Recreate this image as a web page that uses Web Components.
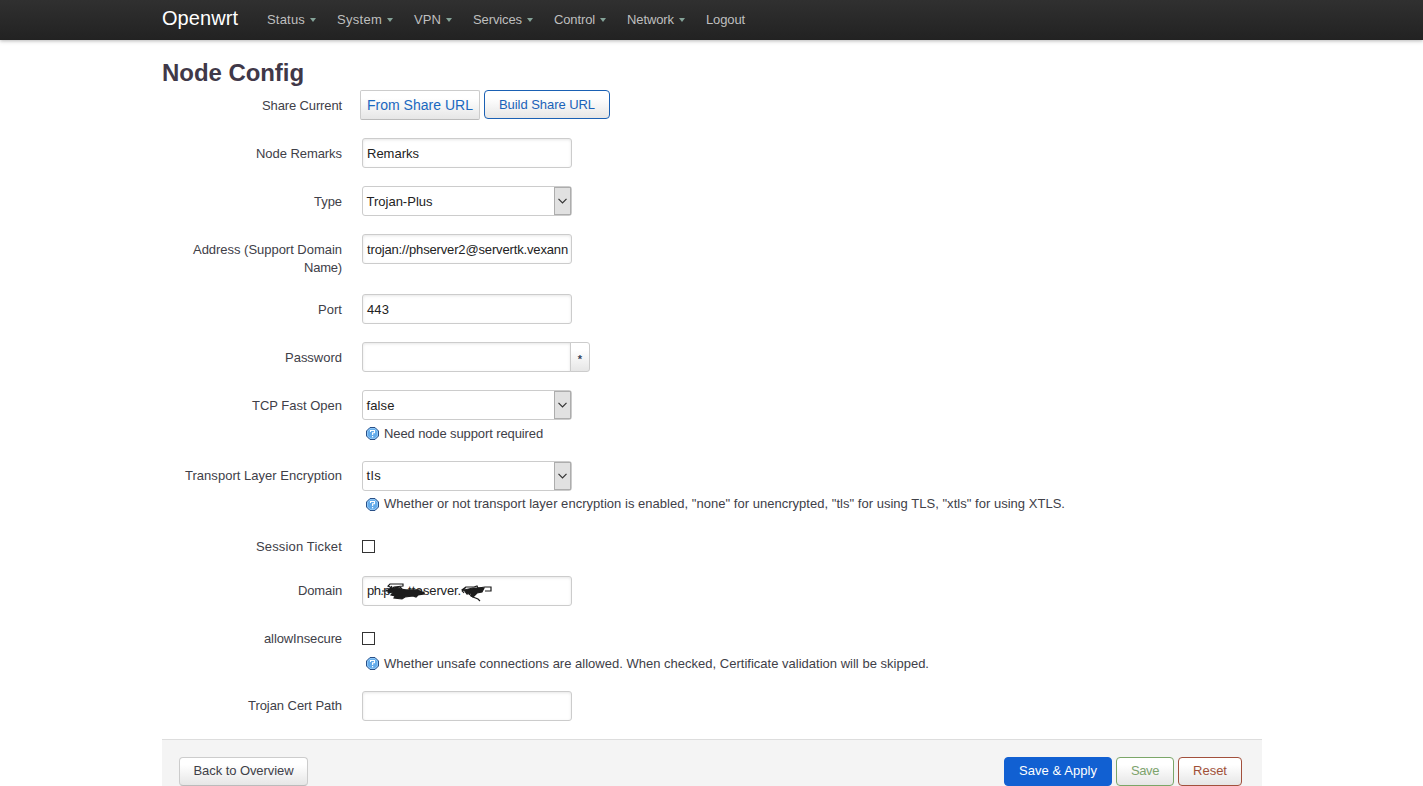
<!DOCTYPE html>
<html lang="en">
<head>
<meta charset="utf-8">
<title>Openwrt - Node Config</title>
<style>
html,body{margin:0;height:786px;overflow:hidden;background:#fff}
body{font:13px/18px "Liberation Sans",Arial,sans-serif;color:#404048}
</style>
</head>
<body>
<node-page></node-page>
<script>
const define = (name, html, ready) => {
  const tpl = document.createElement('template');
  tpl.innerHTML = html;
  customElements.define(name, class extends HTMLElement {
    constructor() {
      super();
      this.attachShadow({mode: 'open'}).appendChild(tpl.content.cloneNode(true));
    }
    connectedCallback() { if (ready) ready(this, this.shadowRoot); }
  });
};

/* Text tracked to an exact line width (w, in px). */
define('fit-text', `<style>:host{display:inline-block;white-space:nowrap}</style><slot></slot>`, el => {
  const w = parseFloat(el.getAttribute('w'));
  el.style.letterSpacing = '0';
  const diff = w - el.getBoundingClientRect().width;
  el.style.letterSpacing = (diff / el.textContent.length) + 'px';
});

define('nav-item', `<style>
:host{display:flex;align-items:center;color:#bfbfbf;font-size:13px;height:40px}
i{width:0;height:0;border:3.5px solid transparent;border-top:4px solid #84a398;border-bottom:0;margin:0 0 0 5px}
:host([plain]) i{display:none}
</style><slot></slot><i></i>`);

define('nav-bar', `<style>
:host{display:block;height:40px;background:linear-gradient(#303030,#222);box-shadow:0 1px 3px rgba(0,0,0,.2),0 2px 5px rgba(0,0,0,.08)}
.in{display:flex;margin-left:162px;align-items:center;height:40px}
.brand{color:#fff;font-size:20px;line-height:36px;height:40px;width:105px}
nav{display:flex;gap:21px}
</style><div class="in"><div class="brand"><fit-text w="76">Openwrt</fit-text></div><nav>
<nav-item><fit-text w="38">Status</fit-text></nav-item>
<nav-item><fit-text w="45">System</fit-text></nav-item>
<nav-item><fit-text w="27">VPN</fit-text></nav-item>
<nav-item><fit-text w="49">Services</fit-text></nav-item>
<nav-item><fit-text w="41">Control</fit-text></nav-item>
<nav-item><fit-text w="47">Network</fit-text></nav-item>
<nav-item plain><fit-text w="39">Logout</fit-text></nav-item>
</nav></div>`);

define('form-row', `<style>
:host{display:grid;grid-template-columns:180px 1fr;column-gap:20px;height:48px;--drop:2px}
:host([high]){--drop:0px}
label{text-align:right;padding-top:calc(6px + var(--drop) / 2)}
</style><label><slot name="label"></slot></label><div><slot></slot></div>`);

define('text-field', `<style>
:host{display:flex;align-items:center;box-sizing:border-box;width:210px;height:30px;border:1px solid #ccc;border-radius:3px;padding:var(--drop,0px) 0 0 4px;color:#222;background:#fff;box-shadow:inset 0 1px 3px rgba(0,0,0,.1);overflow:hidden;white-space:nowrap}
</style><slot></slot>`);

define('secret-field', `<style>
:host{display:flex}
text-field{border-radius:3px 0 0 3px;width:209px}
b{box-sizing:border-box;width:20px;height:30px;margin-left:-1px;border:1px solid #ccc;border-radius:0 3px 3px 0;background:linear-gradient(#fff 25%,#e6e6e6);font:bold 11px/32px "Liberation Sans",sans-serif;text-align:center;color:#34445c}
</style><text-field></text-field><b>*</b>`);

define('select-field', `<style>
:host{display:flex;justify-content:space-between;align-items:center;box-sizing:border-box;width:210px;height:30px;border:1px solid #ccc;border-radius:3px;padding-left:3.5px;color:#222;background:#fff}
div{padding-top:var(--drop,0px)}
span{box-sizing:border-box;width:17px;height:28px;border:1px solid #adadad;background:#e1e1e1;display:grid;place-items:center}
svg{display:block}
</style><div><slot></slot></div><span><svg width="9" height="6" viewBox="0 0 9 6"><path d="M.5 .8 4.5 4.8 8.5 .8" fill="none" stroke="#333" stroke-width="1.2"/></svg></span>`);

define('check-box', `<style>
:host{display:block;box-sizing:border-box;width:13px;height:13px;margin-top:8px;border:1px solid #333;background:#fff}
</style>`);

define('help-text', `<style>
:host{display:flex;align-items:center;height:18px;margin:4px 0 0 4px;white-space:nowrap}
svg{display:block;margin-right:5px}
div{padding-top:var(--drop,0px)}
</style><svg width="13" height="13" viewBox="0 0 13 13"><path d="M4 .5h5L12.5 4v5L9 12.5H4L.5 9V4Z" fill="#62aaea" stroke="#294f86"/><path d="M4.2 1.6h4.6L11.4 4.2v4.6L8.8 11.4H4.2L1.6 8.8V4.2Z" fill="none" stroke="#9fd2fb" stroke-width=".8"/><path d="M4.5 5V3.5h4v2.3H6.6V8" fill="none" stroke="#fff" stroke-width="1.1"/><path d="M6 9h1.2v1.2H6z" fill="#fff"/></svg><div><slot></slot></div>`);

define('push-button', `<style>
:host{display:inline-flex;align-items:center;justify-content:center;box-sizing:border-box;height:29px;border:1px solid #ccc;border-bottom-color:#bbb;border-radius:4px;background:linear-gradient(#fff,#fff 25%,#e6e6e6);color:#404048;padding-bottom:1px}
:host([kind=link]){height:30px;border-radius:2px;color:#1a68c0;font-size:14px;padding:0}
:host([kind=outline]){border-color:#1a60b4;color:#1a62b8;padding:1px 0 0}
:host([kind=apply]){border:1px solid #1160d2;background:#1160d2;color:#fff}
:host([kind=save]){border-color:#7ba668;color:#7da36c}
:host([kind=reset]){border-color:#a2503c;color:#a05038}
</style><slot></slot>`);

/* Domain value with two hand-scribbled strokes over it. */
define('struck-domain', `<style>
:host{display:flex;align-items:center;position:relative;height:28px;width:200px}
svg{position:absolute;left:-5px;top:-1px}
</style><fit-text w="23">ph.p</fit-text><span style="margin-left:18px"><fit-text w="15">tte</fit-text></span><fit-text w="38">server.</fit-text>
<svg width="150" height="30" viewBox="0 0 150 30" fill="none" stroke="#1c1c1c" stroke-width="1.2">
<path d="M20 15h7l3-3-4-2 2-2h13v2l-9 1-3 2 9-2 2 2M24 14h30M26 17l6-3h28M30 10l-3 4M36 22l5-2"/>
<path d="M27 13l8-1 9 2h12l3 2h3v2l-6 1-2 2-3-1-8 1-3 2-8-1 1-2-4-1 2-2-5-1Z" fill="#1c1c1c"/>
<path d="M100 16l4-5h8l3-1 1 2 7-1h6v4h-6M107 18l4 3 5 2 2 2M104 11l-4 3 2 3"/>
<path d="M102 14l9-2h11l-2 4-5 1-4 4-2-1 1-3-5 1Z" fill="#1c1c1c"/>
</svg>`);

define('page-actions', `<style>
:host{display:flex;box-sizing:border-box;width:1100px;height:60px;padding:17px 20px 0 17px;background:#f4f4f4;border-top:1px solid #ddd;gap:4px}
.sp{flex:1}
</style><push-button style="width:129px"><fit-text w="100">Back to Overview</fit-text></push-button><div class="sp"></div>
<push-button kind="apply" style="width:108px"><fit-text w="78">Save &amp; Apply</fit-text></push-button>
<push-button kind="save" style="width:58px"><fit-text w="28">Save</fit-text></push-button>
<push-button kind="reset" style="width:64px"><fit-text w="34">Reset</fit-text></push-button>`);

define('node-page', `<style>
:host{display:block;height:786px;overflow:hidden}
main{margin-left:162px;width:1100px}
h1{margin:0;padding-top:15px;height:35px;font-size:24px;line-height:36px;color:#403848}
.share{display:flex;gap:4px;margin-left:-2px}
</style><nav-bar></nav-bar><main>
<h1><fit-text w="142">Node Config</fit-text></h1>
<form-row><fit-text slot="label" w="80">Share Current</fit-text><div class="share"><push-button kind="link" style="width:120px"><fit-text w="106">From Share URL</fit-text></push-button><push-button kind="outline" style="width:126px"><fit-text w="96">Build Share URL</fit-text></push-button></div></form-row>
<form-row><fit-text slot="label" w="86">Node Remarks</fit-text><text-field><fit-text w="52">Remarks</fit-text></text-field></form-row>
<form-row><fit-text slot="label" w="28">Type</fit-text><select-field><fit-text w="66">Trojan-Plus</fit-text></select-field></form-row>
<form-row style="height:60px"><span slot="label"><fit-text w="149">Address (Support Domain</fit-text><br><fit-text w="38">Name)</fit-text></span><text-field><fit-text w="201">trojan://phserver2@servertk.vexann</fit-text></text-field></form-row>
<form-row><fit-text slot="label" w="24">Port</fit-text><text-field><fit-text w="22">443</fit-text></text-field></form-row>
<form-row><fit-text slot="label" w="57">Password</fit-text><secret-field></secret-field></form-row>
<form-row style="height:71px"><fit-text slot="label" w="90">TCP Fast Open</fit-text><select-field><fit-text w="28">false</fit-text></select-field><help-text><fit-text w="159">Need node support required</fit-text></help-text></form-row>
<form-row high style="height:71px"><fit-text slot="label" w="157">Transport Layer Encryption</fit-text><select-field><fit-text w="15">tls</fit-text></select-field><help-text><fit-text w="681">Whether or not transport layer encryption is enabled, "none" for unencrypted, "tls" for using TLS, "xtls" for using XTLS.</fit-text></help-text></form-row>
<form-row high style="height:44px"><fit-text slot="label" w="86">Session Ticket</fit-text><check-box></check-box></form-row>
<form-row high><fit-text slot="label" w="44">Domain</fit-text><text-field><struck-domain></struck-domain></text-field></form-row>
<form-row high style="height:67px"><fit-text slot="label" w="78">allowInsecure</fit-text><check-box></check-box><help-text style="margin-top:9px;--drop:2px"><fit-text w="545">Whether unsafe connections are allowed. When checked, Certificate validation will be skipped.</fit-text></help-text></form-row>
<form-row high><fit-text slot="label" w="94">Trojan Cert Path</fit-text><text-field></text-field></form-row>
<page-actions></page-actions>
</main>`);
</script>
</body>
</html>
